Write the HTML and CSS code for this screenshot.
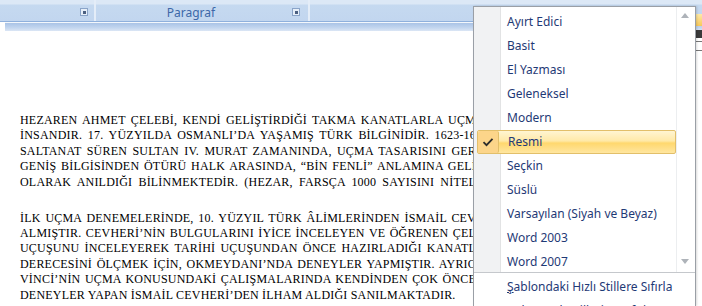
FILE: index.html
```html
<!DOCTYPE html>
<html lang="tr">
<head>
  <meta charset="UTF-8" />
  <title>Hızlı Stil Kümesi</title>
  <link rel="stylesheet" href="styles.css">
</head>
<body>
  <div class="ribbon">
    <div class="groups">
      <div class="group g-font">
        <span class="label"></span>
        <span class="launcher"></span>
      </div>
      <div class="group g-para">
        <span class="label">Paragraf</span>
        <span class="launcher"></span>
      </div>
      <div class="group g-styles">
        <span class="label"></span>
      </div>
    </div>
    <div class="ribbon-foot"></div>
  </div>

  <div class="doc">
    <div class="para">
      <div class="line">HEZAREN AHMET ÇELEBİ, KENDİ GELİŞTİRDİĞİ TAKMA KANATLARLA UÇM</div>
      <div class="line">İNSANDIR. 17. YÜZYILDA OSMANLI’DA YAŞAMIŞ TÜRK BİLGİNİDİR. 1623-16</div>
      <div class="line">SALTANAT SÜREN SULTAN IV. MURAT ZAMANINDA, UÇMA TASARISINI GER</div>
      <div class="line">GENİŞ BİLGİSİNDEN ÖTÜRÜ HALK ARASINDA, “BİN FENLİ” ANLAMINA GELİ</div>
      <div class="line">OLARAK ANILDIĞI BİLİNMEKTEDİR. (HEZAR, FARSÇA 1000 SAYISINI NİTEL</div>
    </div>
    <div class="para">
      <div class="line">İLK UÇMA DENEMELERİNDE, 10. YÜZYIL TÜRK ÂLİMLERİNDEN İSMAİL CEV</div>
      <div class="line">ALMIŞTIR. CEVHERİ’NİN BULGULARINI İYİCE İNCELEYEN VE ÖĞRENEN ÇEL</div>
      <div class="line">UÇUŞUNU İNCELEYEREK TARİHİ UÇUŞUNDAN ÖNCE HAZIRLADIĞI KANATL</div>
      <div class="line">DERECESİNİ ÖLÇMEK İÇİN, OKMEYDANI’NDA DENEYLER YAPMIŞTIR. AYRIC</div>
      <div class="line">VİNCİ’NİN UÇMA KONUSUNDAKİ ÇALIŞMALARINDA KENDİNDEN ÇOK ÖNCE</div>
      <div class="line last">DENEYLER YAPAN İSMAİL CEVHERİ’DEN İLHAM ALDIĞI SANILMAKTADIR.</div>
    </div>
  </div>

  <div class="behind">
    <span class="hl"></span>
    <span class="dark"></span>
    <span class="box"></span>
  </div>

  <div class="menu">
    <div class="menu-list">
      <div class="items">
        <div class="item">Ayırt Edici</div>
        <div class="item">Basit</div>
        <div class="item">El Yazması</div>
        <div class="item">Geleneksel</div>
        <div class="item">Modern</div>
        <div class="item checked">
          <span class="check">
            <svg width="12" height="10" viewBox="0 0 12 10"><path d="M1.5 5.2 L4.5 8.2 L10.5 1.8" fill="none" stroke="#2b2b2b" stroke-width="1.8"/></svg>
          </span>
          Resmi
        </div>
        <div class="item">Seçkin</div>
        <div class="item">Süslü</div>
        <div class="item">Varsayılan (Siyah ve Beyaz)</div>
        <div class="item">Word 2003</div>
        <div class="item">Word 2007</div>
      </div>
      <div class="scroll">
        <span class="arrow up"></span>
        <span class="arrow down"></span>
      </div>
    </div>
    <div class="menu-foot">
      <div class="item"><u>Ş</u>ablondaki Hızlı Stillere Sıfırla</div>
      <div class="item">Belge Hızlı Stillerine Sıfırla</div>
    </div>
  </div>
</body>
</html>
```

FILE: styles.css
```css
* {
  box-sizing: border-box; margin: 0; padding: 0;
}

body {
  width: 702px;
  height: 306px;
  overflow: hidden;
  position: relative;
  background: #fff;
  font-family: "Noto Sans", Arial, sans-serif;
}

/* ribbon */
.ribbon {
  height: 31px;
  background: #fff;
}

.groups {
  display: flex;
  height: 22px;
  background: linear-gradient(#dce8f6 0, #dce8f6 4px, #c5d9f0 5px, #c2d6ef 100%);
  border-bottom: 1px solid #8fb0dc;
}

.group {
  position: relative;
  display: flex;
  align-items: center;
  justify-content: center;
  border-right: 2px solid #e4edf8;
  padding-top: 3px;
}

.g-font { width: 96px; }
.g-para { width: 214px; padding-right: 22px; }
.g-styles { flex: 1; border-right: none; }

.label {
  font-size: 12px;
  color: #3d68a8;
}

.launcher {
  position: absolute;
  right: 8px;
  top: 8px;
  width: 8px;
  height: 8px;
  border: 1px solid #8aa4c8;
  background: #e6eef8;
}

.g-font .launcher {
  right: 6px;
}

.launcher::after {
  content: "";
  position: absolute;
  right: 1px;
  bottom: 1px;
  width: 3px;
  height: 3px;
  background: #4a5f80;
}

.ribbon-foot {
  height: 9px;
  margin-left: 5px;
  background: linear-gradient(#a9c3e6, #c3d6ef 60%, #dbe6f5);
  border-top: 1px solid #f3f7fc;
}

/* document */
.doc {
  padding: 82px 0 0 20px;
  font-family: "Liberation Serif", "Times New Roman", serif;
  font-size: 12px;
  color: #000;
}

.para + .para {
  margin-top: 20.6px;
}

.line {
  width: 456px;
  height: 15.4px;
  line-height: 15.4px;
  white-space: nowrap;
  text-align: justify;
  text-align-last: justify;
  letter-spacing: 0.2px;
}

.line.last {
  text-align-last: left;
}

/* ribbon bits peeking out right of the menu */
.behind {
  position: absolute;
  left: 695px;
  top: 14px;
  width: 7px;
  height: 40px;
}

.behind .hl {
  display: block;
  height: 12px;
  background: linear-gradient(#fde9a8, #f8c85a);
}

.behind .dark {
  display: block;
  height: 8px;
  margin-top: 4px;
  background: #3a3a3a;
}

.behind .box {
  display: block;
  height: 10px;
  margin-top: 3px;
  border: 1px solid #777;
  border-right: none;
}

/* drop-down menu */
.menu {
  position: absolute;
  left: 473px;
  top: 6px;
  width: 223px;
  height: 300px;
  background: #fff;
  border: 1px solid #9a9fa6;
  border-bottom: none;
  box-shadow: 1px 0 2px rgba(0, 0, 0, 0.15);
  overflow: hidden;
}

.menu-list {
  display: flex;
  height: 266px;
  border-bottom: 1px solid #c5c8cc;
  background: linear-gradient(90deg, #f1f2f3 0, #f1f2f3 26px, #e2e3e4 26px, #e2e3e4 27px, #fff 27px);
}

.items {
  flex: 1;
  padding-top: 3px;
}

.item {
  position: relative;
  height: 24px;
  line-height: 24px;
  padding-left: 33px;
  font-size: 12px;
  color: #1f3a76;
}

.item.checked {
  margin: 0 0 0 3px;
  padding-left: 30px;
  border: 1px solid #e2bf6a;
  border-radius: 2px;
  background: linear-gradient(#fff5d2, #ffe9a8 45%, #ffd86e 55%, #ffe6a0);
  line-height: 22px;
}

.check {
  position: absolute;
  left: 0;
  top: 0;
  width: 21px;
  height: 22px;
  border-right: 1px solid #e2bf6a;
  border-radius: 2px;
  background: #fcd58a;
  display: flex;
  align-items: center;
  justify-content: center;
}

.scroll {
  position: relative;
  width: 19px;
  border-left: 1px solid #eceef0;
}

.arrow {
  position: absolute;
  left: 4px;
  width: 0;
  height: 0;
  border-left: 4px solid transparent;
  border-right: 4px solid transparent;
}

.arrow.up {
  top: 6px;
  border-bottom: 5px solid #aeb3b9;
}

.arrow.down {
  bottom: 8px;
  border-top: 5px solid #aeb3b9;
}

.menu-foot {
  padding-top: 2px;
}

.menu-foot .item {
  padding-left: 33px;
}
```
